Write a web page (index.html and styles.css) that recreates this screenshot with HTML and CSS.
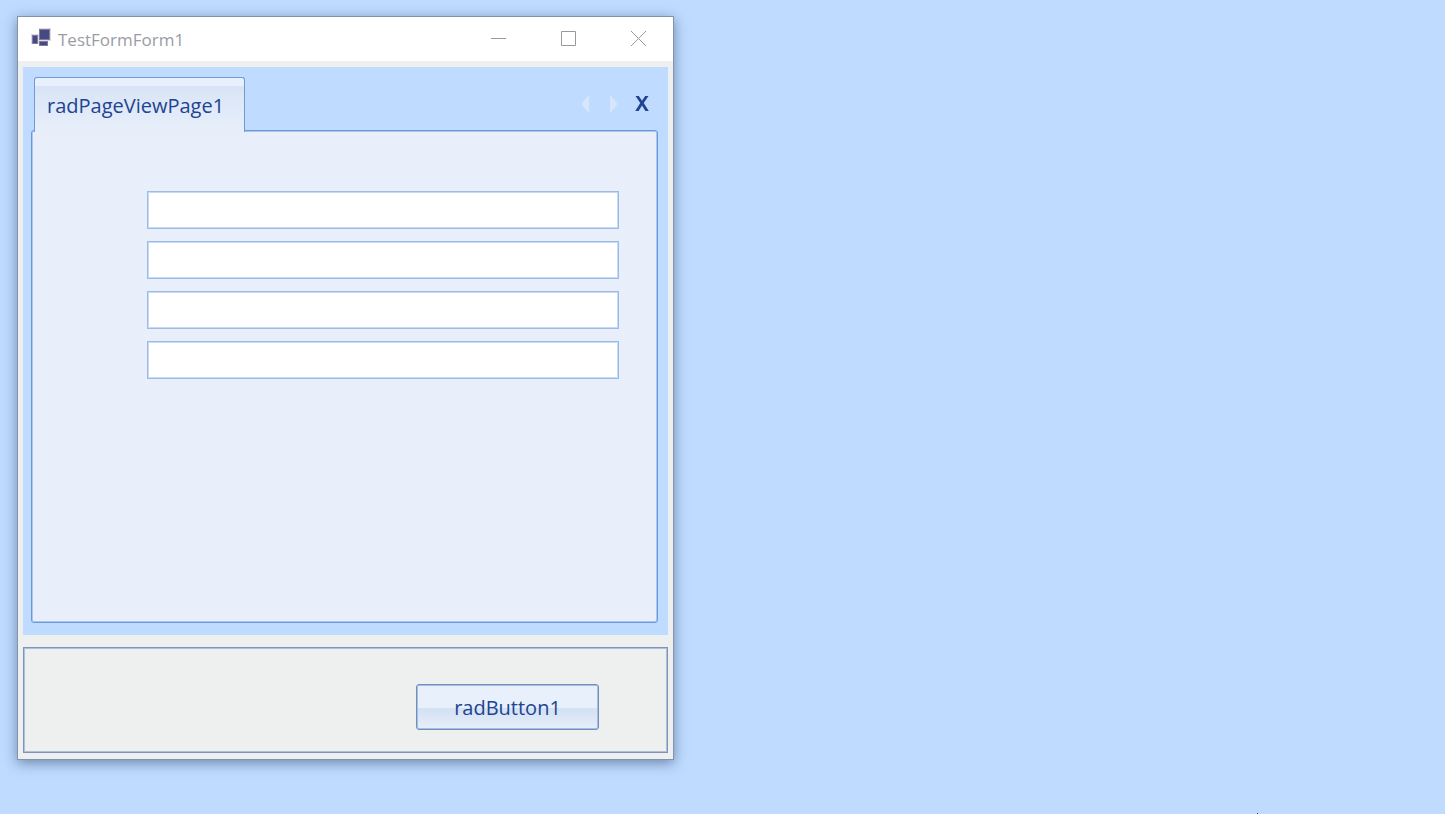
FILE: index.html
```html
<!DOCTYPE html>
<html lang="en">
<head>
  <meta charset="UTF-8">
  <meta name="viewport" content="width=device-width, initial-scale=1">
  <title>TestFormForm1</title>
  <link rel="stylesheet" href="styles.css">
</head>
<body>

<main class="window">
  <header class="titlebar">
    <svg class="app-icon" width="20" height="20" viewBox="0 0 20 20" shape-rendering="crispEdges" aria-hidden="true">
      <path fill="#dcdce0" d="M8 0h12v13h-3v5H8v-2H0V6h8z"/>
      <path fill="#857a9c" d="M8 1h11v11H8zM1 7h6v9H1zM8 13h9v5H8z"/>
      <path fill="#444b84" d="M9 2h9v9H9zM2 8h4v7H2zM9 14h7v3H9z"/>
    </svg>
    <h1>TestFormForm1</h1>
    <div class="window-buttons">
      <button type="button" aria-label="Minimize">
        <svg width="15" height="15" viewBox="0 0 15 15"><path d="M0 7.5h15"/></svg>
      </button>
      <button type="button" aria-label="Maximize">
        <svg width="15" height="15" viewBox="0 0 15 15"><path d="M.5 .5h14v14H.5z"/></svg>
      </button>
      <button type="button" aria-label="Close">
        <svg width="15" height="15" viewBox="0 0 15 15"><path d="M0 0l15 15M15 0L0 15"/></svg>
      </button>
    </div>
  </header>

  <div class="client">
    <section class="page-view">
      <div class="tab-strip">
        <button type="button" class="tab">radPageViewPage1</button>
        <div class="strip-buttons">
          <button type="button" class="scroll" aria-label="Scroll left" disabled>
            <svg width="8" height="16" viewBox="0 0 8 16"><path d="M7 0v16H6L0 9V7l6-7z"/></svg>
          </button>
          <button type="button" class="scroll" aria-label="Scroll right" disabled>
            <svg width="8" height="16" viewBox="0 0 8 16"><path d="M0 0v16h1l6-7V7L1 0z"/></svg>
          </button>
          <button type="button" class="close-page" aria-label="Close page">
            <svg width="14" height="15" viewBox="0 0 14 15"><path d="M.5 0h3.300L7 4.800 10.200 0h3.300L8.700 7l5.100 8h-3.400L7 9.600 3.600 15H.2l5.100-8z"/></svg>
          </button>
        </div>
      </div>
      <div class="page">
        <input type="text" aria-label="radTextBox1">
        <input type="text" aria-label="radTextBox2">
        <input type="text" aria-label="radTextBox3">
        <input type="text" aria-label="radTextBox4">
      </div>
    </section>

    <section class="panel">
      <button type="button" class="rad-button">radButton1</button>
    </section>
  </div>
</main>

<div class="pointer"></div>

</body>
</html>
```

FILE: styles.css
```css
* {
  box-sizing: border-box;
}
body {
  margin: 0;
  padding: 16px 17px;
  min-height: 100vh;
  background: #bfdbff;
  font-family: "Open Sans", "Segoe UI", sans-serif;
}
button {
  padding: 0;
  border: none;
  background: none;
  font-family: inherit;
}
svg {
  display: block;
}
.window {
  max-width: 657px;
  border: 1px solid #8294ac;
  background: #eef0f0;
  box-shadow: 0 3px 12px rgba(30, 50, 90, 0.5);
}

/* title bar */
.titlebar {
  display: flex;
  align-items: center;
  height: 44px;
  padding: 0 27px 0 13px;
  background: #fff;
}
.app-icon {
  margin-bottom: 3px;
}
h1 {
  flex: 1;
  margin: 0 0 0 7px;
  color: #9a9ca6;
  font-size: 17px;
  font-weight: 400;
}
.window-buttons {
  display: flex;
  gap: 55px;
  padding-bottom: 2px;
}
.window-buttons path {
  fill: none;
  stroke: #999;
}

.client {
  padding: 6px 5px;
}

/* page view */
.page-view {
  padding: 10px 10px 12px 8px;
  background: #bfdbff;
}
.tab-strip {
  display: flex;
  justify-content: space-between;
  padding: 0 9px 0 3px;
}
.tab {
  position: relative;
  height: 55px;
  margin-bottom: -2px;
  padding: 0 20px 0 12px;
  border: 1px solid #6f9bd8;
  border-bottom: none;
  border-radius: 3px 3px 0 0;
  background: linear-gradient(#e8f0fb 8px, #d8e4f6 8px, #e8effa);
  color: #204490;
  font-size: 20px;
}
.strip-buttons {
  display: flex;
  align-items: center;
  gap: 20px;
}
.scroll path {
  fill: #d9e6f9;
}
.close-page {
  margin-left: -3px;
}
.close-page path {
  fill: #204490;
}
.page {
  display: flex;
  flex-direction: column;
  gap: 12px;
  padding: 60px 38px 243px 115px;
  border: 1px solid #6b98d8;
  border-radius: 3px;
  background: #e8effa;
  box-shadow: inset 0 0 0 1px #a9c6ec;
}
.page input {
  width: 100%;
  height: 38px;
  padding: 0 8px;
  border: 1px solid #9bbbe8;
  background: #fff;
  box-shadow: inset 0 0 0 1px #c6daf4;
  color: #204490;
  font-family: inherit;
  font-size: 20px;
}

/* bottom panel */
.panel {
  display: flex;
  justify-content: flex-end;
  margin-top: 12px;
  padding: 36px 68px 22px;
  border: 1px solid #7b95bf;
  box-shadow: inset 0 0 0 1px #b0bfd6;
}
.rad-button {
  width: 183px;
  height: 46px;
  border: 1px solid #6f8fbf;
  border-radius: 3px;
  background: linear-gradient(#e8f0fc 53%, #d3e1f4 53%, #e6eefa);
  box-shadow: inset 0 0 0 1px #a9bedd;
  color: #204490;
  font-size: 20px;
}

/* tip of the mouse pointer at the screen edge */
.pointer {
  position: fixed;
  bottom: 0;
  left: 87%;
  width: 1px;
  height: 1px;
  background: #28406e;
}
```
